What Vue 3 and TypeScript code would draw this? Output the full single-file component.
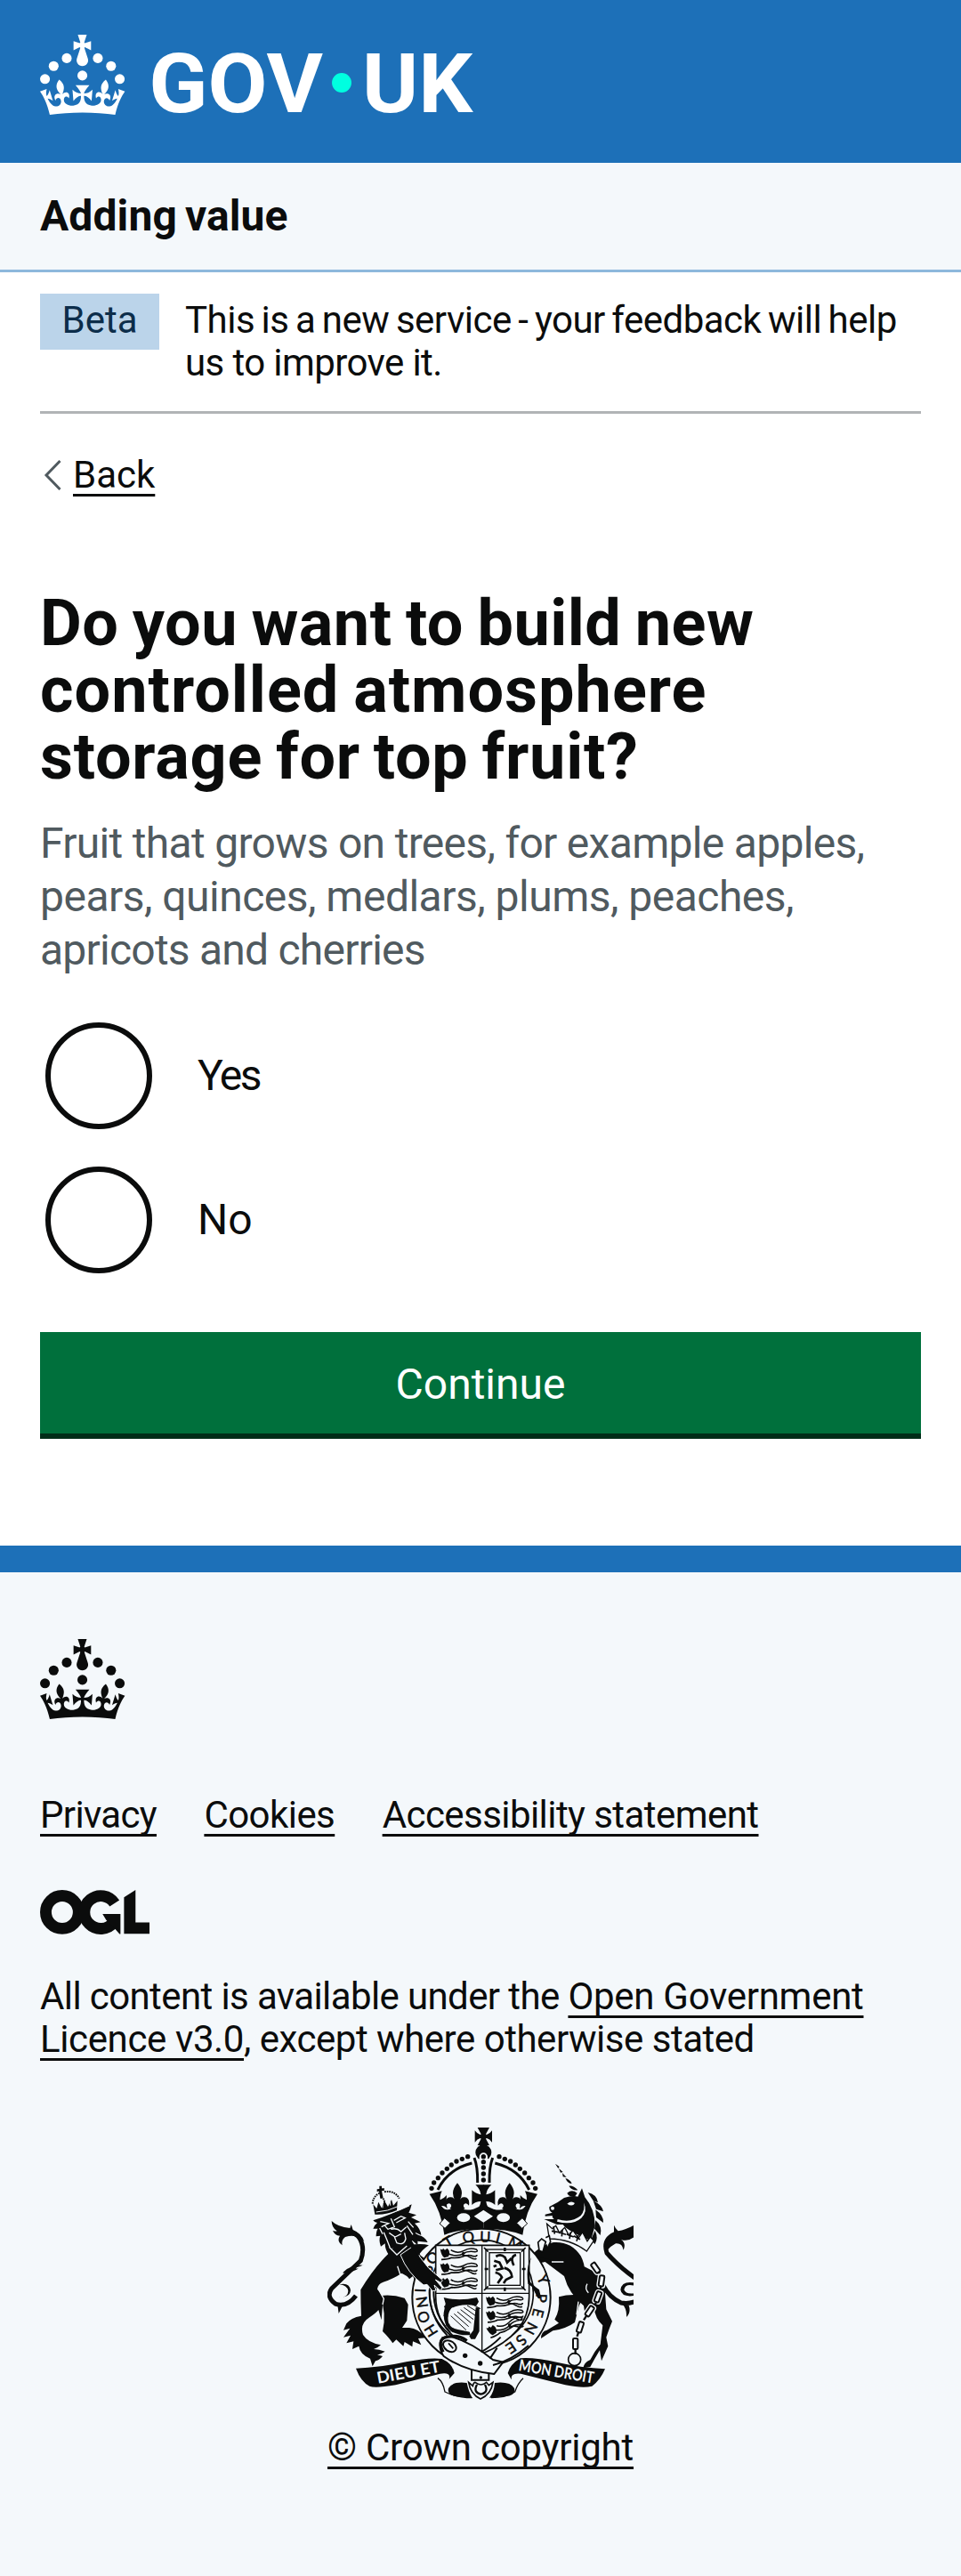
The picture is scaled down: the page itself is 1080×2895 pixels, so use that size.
<script setup lang="ts">
import { ref } from 'vue'

type Glyph = { c: string; x: number; y: number; r: number }
type Pose = { x: number; y: number; r: number }

const answer = ref<string>('')
const options = [
  { value: 'yes', label: 'Yes' },
  { value: 'no', label: 'No' },
]

const crownBeads = [
  [20, 17.6], [10.2, 23.5], [3.7, 33.2], [43.3, 17.6], [53.2, 23.5], [59.7, 33.2], [31.7, 30.6],
]
const crownPath =
  'M33.1,9.8c.2-.1.3-.3.5-.5l4.6,2.4v-6.8l-4.6,1.5c-.1-.2-.3-.3-.5-.5l1.9-5.9h-6.7l1.9,5.9c-.2.1-.3.3-.5.5l-4.6-1.5v6.8l4.6-2.4c.1.2.3.3.5.5l-2.6,8c-.9,2.8,1.2,5.7,4.1,5.7h0c3,0,5.1-2.9,4.1-5.7l-2.6-8ZM37,37.9s-3.4,3.8-4.1,6.1c2.2,0,4.2-.5,6.4-2.8l-.7,8.5c-2-2.8-4.4-4.1-5.7-3.8.1,3.1.5,6.7,5.8,7.2,3.7.3,6.7-1.5,7-3.8.4-2.6-2-4.3-3.7-1.6-1.4-4.5,2.4-6.1,4.9-3.2-1.9-4.5-1.8-7.7,2.4-10.9,3,4,2.6,7.3-1.2,11.1,2.4-1.3,6.2,0,4,4.6-1.2-2.8-3.7-2.2-4.2.2-.3,1.7.7,3.7,3,4.2,1.9.3,4.7-.9,7-5.9-1.3,0-2.4.7-3.9,1.7l2.4-8c.6,2.3,1.4,3.7,2.2,4.5.6-1.6.5-2.8,0-5.3l5,1.8c-2.6,3.6-5.2,8.7-7.3,17.5-7.4-1.1-15.7-1.7-24.5-1.7h0c-8.8,0-17.1.6-24.5,1.7-2.1-8.9-4.7-13.9-7.3-17.5l5-1.8c-.5,2.5-.6,3.7,0,5.3.8-.8,1.6-2.3,2.2-4.5l2.4,8c-1.5-1-2.6-1.7-3.9-1.7,2.3,5,5.2,6.2,7,5.9,2.3-.4,3.3-2.4,3-4.2-.5-2.4-3-3.1-4.2-.2-2.2-4.6,1.6-6,4-4.6-3.7-3.7-4.2-7.1-1.2-11.1,4.2,3.2,4.3,6.4,2.4,10.9,2.5-2.8,6.3-1.3,4.9,3.2-1.8-2.7-4.1-1-3.7,1.6.3,2.3,3.3,4.1,7,3.8,5.4-.5,5.7-4.2,5.8-7.2-1.3-.2-3.7,1-5.7,3.8l-.7-8.5c2.2,2.3,4.2,2.7,6.4,2.8-.7-2.3-4.1-6.1-4.1-6.1h10.6,0Z'

const archBeads = [
  [405, 238], [413, 219], [427, 203], [441, 186], [457, 172], [472, 159], [489, 147], [508, 139], [527, 131],
]
const stemBeads = [131, 149, 168, 189, 210]

// Garter motto, letter by letter round the belt
const motto: Glyph[] = [
  { c: 'H', x: 403, y: 718, r: 58 }, { c: 'O', x: 378, y: 672, r: 68 }, { c: 'N', x: 373, y: 622, r: 82 },
  { c: 'I', x: 367, y: 582, r: 92 }, { c: 'S', x: 391, y: 508, r: -66 }, { c: 'O', x: 408, y: 472, r: -56 },
  { c: 'T', x: 462, y: 418, r: -30 }, { c: 'Q', x: 529, y: 402, r: -8 }, { c: 'U', x: 586, y: 401, r: 2 },
  { c: 'I', x: 629, y: 406, r: 14 }, { c: 'M', x: 688, y: 424, r: 26 }, { c: 'Y', x: 782, y: 545, r: 66 },
  { c: 'P', x: 776, y: 608, r: 92 }, { c: 'E', x: 764, y: 658, r: 104 }, { c: 'N', x: 740, y: 710, r: 118 },
  { c: 'S', x: 708, y: 750, r: 134 }, { c: 'E', x: 673, y: 775, r: 146 },
]

const passant: Pose[] = [
  { x: 430, y: 438, r: 0 }, { x: 430, y: 488, r: 0 }, { x: 430, y: 538, r: 0 },
  { x: 584, y: 600, r: 0 }, { x: 584, y: 650, r: -3 }, { x: 584, y: 706, r: -18 },
]
const harpStrings = [0, 1, 2, 3, 4, 5, 6]
const links: Pose[] = [
  { x: 958, y: 506, r: -35 }, { x: 978, y: 550, r: 8 }, { x: 966, y: 604, r: 20 },
  { x: 938, y: 652, r: 34 }, { x: 906, y: 706, r: 18 }, { x: 890, y: 762, r: 0 },
]
</script>

<template>
  <div class="page">
    <header class="header">
      <svg class="logotype" viewBox="0 0 330 60" role="img" aria-label="GOV.UK">
        <g fill="#fff">
          <circle v-for="(b, i) in crownBeads" :key="i" :cx="b[0]" :cy="b[1]" r="3.7" />
          <path :d="crownPath" />
          <text class="logo-text" x="81.500" y="58.1" textLength="130.500" lengthAdjust="spacingAndGlyphs">GOV</text>
          <text class="logo-text" x="241.3" y="58.1" textLength="82.800" lengthAdjust="spacingAndGlyphs">UK</text>
        </g>
        <circle cx="226" cy="36" r="7.3" fill="#00ffe0" />
      </svg>
    </header>

    <nav class="service"><span>Adding value</span></nav>

    <div class="container">
      <div class="phase">
        <strong class="tag">Beta</strong>
        <p class="phase-text">
          <span class="phase-a">This is a new service - your feedback will help</span><br />
          <span class="phase-b">us to improve it.</span>
        </p>
      </div>

      <a class="back">
        <svg viewBox="0 0 20 34" class="chevron"><path d="M18.5 1 3 17l15.5 16" fill="none" stroke="#505a5f" stroke-width="3" /></svg>
        <span class="link">Back</span>
      </a>

      <main>
        <h1>
          <span class="h-a">Do you want to build new</span><br />
          <span class="h-b">controlled atmosphere</span><br />
          <span class="h-c">storage for top fruit?</span>
        </h1>
        <p class="hint">
          <span class="hint-a">Fruit that grows on trees, for example apples,</span><br />
          <span class="hint-b">pears, quinces, medlars, plums, peaches,</span><br />
          <span class="hint-c">apricots and cherries</span>
        </p>
        <div class="radios">
          <label v-for="o in options" :key="o.value" class="radio">
            <input v-model="answer" type="radio" name="storage" :value="o.value" />
            <span :class="['radio-label', o.value]">{{ o.label }}</span>
          </label>
        </div>
        <button class="button" type="button">Continue</button>
      </main>
    </div>

    <footer class="footer">
      <svg class="crown" viewBox="0 0 64 60">
        <circle v-for="(b, i) in crownBeads" :key="i" :cx="b[0]" :cy="b[1]" r="3.7" />
        <path :d="crownPath" />
      </svg>
      <div class="links">
        <a class="link l-privacy">Privacy</a>
        <a class="link l-cookies">Cookies</a>
        <a class="link l-access">Accessibility statement</a>
      </div>
      <svg class="ogl" viewBox="0 0 483.2 195.7" aria-label="Open Government Licence">
        <circle cx="97.8" cy="97.8" r="72.4" fill="none" stroke="currentColor" stroke-width="50.7" />
        <path d="M329 59A72.4 72.4 0 1 0 325 143" fill="none" stroke="currentColor" stroke-width="50.7" />
        <path d="M276 106h79v88h-4l-19-22-40-40z" />
        <path d="M421.500 142.800V0l-50.700 32.400v161.100h112.400v-50.700z" />
      </svg>
      <p class="licence">
        <span class="li-a">All content is available under the </span><a class="link li-b">Open Government</a><br />
        <a class="link li-c">Licence v3.0</a><span class="li-d">, except where otherwise stated</span>
      </p>

      <div class="copyright">
        <svg class="crest" viewBox="54 33 1032 918" fill="currentColor">
          <defs>
            <g id="passant">
              <path d="M4 4q8 6 10-2l6 6 8-6 6 8q4 10-2 20l-14 4q-10-6-14-30z" />
              <path d="M8 40q22 0 34-6 20 2 38-4 20-8 32-2 16 4 16-4" fill="none" stroke="currentColor" stroke-width="5" />
              <path d="M40 8q22 14 44 2 20-12 42-4 8 8-4 8-26-4-40 6-18 12-48 2m44 4q16-2 30 8 14 8 18 2" fill="none" stroke="currentColor" stroke-width="4.5" />
              <circle cx="82" cy="19" r="5" />
            </g>
            <g id="crown-half">
              <circle v-for="(b, i) in archBeads" :key="i" :cx="b[0]" :cy="b[1]" r="8" />
              <path d="M426 243q34-70 115-90" fill="none" stroke="currentColor" stroke-width="9" />
              <path d="M549 135q12 30 11 84" fill="none" stroke="currentColor" stroke-width="9" />
              <path d="M398 257l42-10q-8 16-6 30 12-4 22-16-2 26 2 46-8-12-20-10 10 16 26 12 18-2 28-9 24 16 54 8 20-6 34-20v86q-78 0-132 21-10-82-50-138z" />
              <path d="M492 220q15 18 15 34 0 12-8 28 4-16 18-14 18 2 14 28-8-12-16-5-6 7 3 15l-16 8h-20l-16-8q9-8 3-15-8-7-16 5-4-26 14-28 14-2 18 14-8-16-8-28 0-16 15-34z" />
              <path d="M553 226h28v90h-26q14-16 16-34-18 0-30 12v-50q12 12 30 15-2-18-18-33z" />
            </g>
          </defs>

          <!-- lion's tail -->
          <path d="M150 600q-30 40-68 28-34-24-14-52l98-94q16-44-4-76-10-16-32-20" fill="none" stroke="currentColor" stroke-width="15" />
          <path d="M68 348q20 20 62 24l4-12 6 18q30 12 38 40-24-28-64-16-14 10-10 28-20-14-8-32-18-2-24-18 10 4 14 2-18-12-18-34zM88 602q34 8 36-18-4-20-30-22 34-8 38 20-2 28-44 20zM108 520q20-22 68-24-14 8-30 10 8 4 14 2-22 14-54 16zM92 660l-4-30 20-2z" />

          <!-- lion -->
          <path d="M262 456q-52 50-96 124 0 44 2 88-36 6-50 26l-10 22 22-6-22 30 24-6-14 26 24-6-4 26 22-10q4 28 38 42l8 26 10-18q12-2 24-16-10-4-18-4 14-4 26-12-20-8-38-8 14-4 24-14-44-8-60-34-12-38 20-58 22-14 32-26l10 34 4-50q6-32-18-54 2-18 20-24 36-12 62-30 22 10 26 20l12-10 10 20 14-12 16 20 12-14 20 20 10-16 22 4q-30-60-78-92l-30-50 54 6q-10-20-30-24l-40-20z" />
          <path d="M232 600q40-6 82 8l12 22-4 54-16 24 24 0q30 2 56 34l-26 2 10 22-28-12-2 18-26-16-4 14-24-22-12 12q-12-18-34-40 14-58-8-120z" />
          <path d="M208 346q60-18 130-54-4 18-10 28l26 8-18 8 32 16-20 4q20 18 22 40l-20-10q10 22 8 44l-20-18-8 28-22-18-18 38-16-22-12 26q-14-18-14-40l-14 10q-8-22-2-36l-14 2q0-18 6-26l-16 0q6-14 14-20-10-2-14-8z" />
          <path d="M212 334q56-8 118-38M232 350l28 6-24 12M278 346l24-14 14 6-30 16M268 340l12 28-22 8-10-12M268 376q20-6 34 8l18-16M262 388l20 14 20-10M280 402l8 20q24 10 30-14l-4-20M244 386l10 24 10 26M326 350l18 20M322 364l20 30M230 372l10 20M262 436l26 26 34-30M248 570l-20 12 16 28-4 20M290 500l14 42M330 470l20 30 40 32M170 496l20-6" fill="none" stroke="#f4f8fb" stroke-width="4" />
          <path d="M214 326l-6-34 12 14 6-22 10 20 10-24 12 20 12-24 6 20 14-16-2 32q-36 16-74 14z" />
          <path d="M218 318q40-2 76-20M240 290v14M266 284v12" fill="none" stroke="#f4f8fb" stroke-width="3" />
          <path d="M229 230l8 0 0 8 9 0-1 8-8 1 5 24-10 1-4-24-7 1 0-8 8-1z" />
          <path d="M206 290q2-26 24-36m4 14q12 4 12 16m0-34q34-6 50 22" fill="none" stroke="currentColor" stroke-width="6" stroke-dasharray="5 3" />

          <!-- unicorn's tail -->
          <path d="M984 566q20 40 60 58 30 6 60-10M1090 540q-56-40-94-84-16-50 36-68" fill="none" stroke="currentColor" stroke-width="15" />
          <path d="M1020 362q4 10 14 20 26-4 54-20v40q-24 18-44 8 18 14 8 36-4-24-26-22-20 10-34 28 0-40 28-56zM1086 556q-40-6-44 24 4 26 46 20v-8q-28 4-34-12 4-22 34-14zM1050 630q14 16 12 42 16-14 8-40z" />

          <!-- unicorn -->
          <path d="M740 468q30-40 76-48 60-4 92 46 10 20 12 36l40 20q32 26 30 70l4 54 20 40q-10 24-20 54l6 30-22 50-6-36q-18 30-32 56l-24 4q2-18 24-28 12-26 34-52l8-64q-24-20-30-60-20 14-28 34l-6-40q-50-40-66-100l-64-48q-28 4-52 22z" />
          <path d="M762 470l78 14-10 10-50-14-24 20q-4 30 8 50l14 50-14 8-22-44-12-10q-6-40 12-66z" />
          <path d="M834 604q40-12 86-4l-18 34-14 56q-30 22-74 28l-40 26q0-24 20-28l40-24-14-12q18-28 14-76z" />
          <path d="M770 490q-6 20-26 22M850 486l-40 0M930 560q-10 16 4 30M900 620l-6 44M766 556l8 30" fill="none" stroke="#f4f8fb" stroke-width="4" />
          <path d="M802 300q30-14 50-30 30-10 46-4l14-28 10 30q34 40 34 96l-14 50q-40-16-64-30-24-14-30-24l-20 0-20-8-24-10 34 0q-10-10-4-12l-26 2 0-6 24-6q-12-6-10-20z" />
          <path d="M830 342q46 14 78-12 16-18 10-44 14 30-8 52-30 26-82 12zM862 290q14-12 26-2-8 14-26 2z" fill="#f4f8fb" />
          <circle cx="813" cy="305" r="6" fill="#f4f8fb" />
          <path d="M822 155l14 10-4 6zM834 171l14 12-8 2zM846 186l14 15-12-2zM856 204q16 4 22 18-14 0-22-18zM868 230q16-2 30 14-20 2-30-14zM862 254q16-14 34 0l-8 12q-20 2-26-12zM932 252q30 6 34 34l-16-6zM950 280q30 14 34 36l-24-8zM958 310q28 20 26 44l-24-18zM958 346q24 20 16 50l-20-22zM956 380q12 24 0 46l-14-14z" />
          <path d="M794 358l8 50q70 0 126 42l24-36-12-12-10 14-16-30-14 20-18-26-14 16-14-26-18 18-12-24-12 10z" fill="#f4f8fb" stroke="currentColor" stroke-width="4" />
          <path d="M816 366l4 26m-10-10l24 4m12-8l-2 22m-10-14l24 8m16-8l-4 22m-10-16l24 10m16-6l-6 20m-10-18l22 12" fill="none" stroke="currentColor" stroke-width="5" />

          <!-- garter -->
          <ellipse cx="573" cy="606" rx="233" ry="232" fill="#f4f8fb" stroke="currentColor" stroke-width="6" />
          <ellipse cx="573" cy="590" rx="175" ry="178" fill="none" stroke="currentColor" stroke-width="5" />
          <text v-for="(g, i) in motto" :key="i" class="motto" text-anchor="middle" dominant-baseline="central" :transform="`translate(${g.x} ${g.y}) rotate(${g.r})`">{{ g.c }}</text>

          <!-- royal crown -->
          <use href="#crown-half" />
          <use href="#crown-half" transform="matrix(-1 0 0 1 1160 0)" />
          <path d="M560 33h40l-11 20q-1 6 2 4 10-2 18-14v40q-8-12-18-14-4-1-2 4l11 20h-40l11-20q2-5-2-4-10 2-18 14V43q8 12 18 14 4 1 2-4z" />
          <circle cx="580" cy="117" r="27" />
          <path d="M566 148v-16a14 14 0 0 1 28 0v16z" fill="#f4f8fb" />
          <circle v-for="y in stemBeads" :key="y" cx="580" :cy="y" r="8" />
          <g fill="#f4f8fb">
            <path d="M580 311l32 21-32 21-32-21z" />
            <ellipse cx="513" cy="337" rx="22" ry="15" /><ellipse cx="647" cy="337" rx="22" ry="15" />
            <path d="M449 338l19 17-18 18-18-16zM711 338l-19 17 18 18 18-16z" stroke="currentColor" stroke-width="3" />
          </g>

          <!-- shield -->
          <path d="M419 430h315v170q2 130-159 196-157-66-156-196z" fill="#f4f8fb" stroke="currentColor" stroke-width="5" />
          <path d="M575 430v366M420 592h314" stroke="currentColor" stroke-width="4" />
          <use v-for="(p, i) in passant" :key="i" href="#passant" :transform="`translate(${p.x} ${p.y}) rotate(${p.r})`" />
          <g fill="none" stroke="currentColor">
            <rect x="588" y="444" width="128" height="132" stroke-width="4" />
            <rect x="600" y="455" width="104" height="110" stroke-width="4" />
            <path d="M652 438v12m0 122v12M584 510h12m114 0h12" stroke-width="8" />
            <path d="M582 438l14 14m126-14l-14 14M582 582l14-14m126 14l-14-14" stroke-width="5" />
            <path d="M622 468q16-10 30 2l8 18 14-14m-58 8l18 6 10 20-22 6m2-16-10 4m36 4q24 6 26 30l-20 10-8 12m-28-36q16 2 22 16l-14 20m54-60q-14-30 8-36" stroke-width="8" />
          </g>
          <path d="M446 606q50 14 112 0l6 14-8 14q-50-10-84 8-16 20-10 48 6 20 32 24l40 8 2 10q-30 4-62-10-30-20-28-64l6-32z" />
          <path d="M566 640v80l-14 26h-14l-6-10 14-20 8-76z" />
          <path v-for="n in harpStrings" :key="n" :d="`M${470 + n * 11} ${668 - n * 7}l${52 - n * 3} ${48 - n * 5}`" stroke="currentColor" stroke-width="3" />
          <path d="M398 580q-2 90 60 154M412 580q-2 84 56 144M448 636l10 4m-12 26l14 4m-6 28l12 0m4 20l6-8" fill="none" stroke="currentColor" stroke-width="6" />

          <!-- paws laid over the shield -->
          <path d="M300 462l44-30q20 40 52 76 24 20 46 40l-6 8-18-10 22 26-4 12-22-20 6 18-12 2-18-22-12 2q-54-40-78-102z" stroke="#f4f8fb" stroke-width="3" />
          <path d="M330 430q40-8 66 0-22 14-36 36z" />
          <path d="M742 470q-16 40-4 84 16 16 30 26l6 26q-6 8-12 0l-18-36-14-10q-8-60 12-90z" />
          <path d="M764 420l12-12 14 10-10 34-12-4zM790 404l12-6 4 20-10 20" fill="#f4f8fb" stroke="currentColor" stroke-width="5" />

          <!-- chain -->
          <g v-for="(l, i) in links" :key="i" :transform="`translate(${l.x} ${l.y}) rotate(${l.r})`">
            <rect x="-9" y="-19" width="18" height="38" rx="5" fill="#f4f8fb" stroke="#f4f8fb" stroke-width="12" />
            <rect x="-8" y="-18" width="16" height="36" rx="4" fill="#f4f8fb" stroke="currentColor" stroke-width="6" />
            <path d="M0 20v16" stroke="currentColor" stroke-width="7" />
          </g>
          <circle cx="887" cy="815" r="21" fill="none" stroke="currentColor" stroke-width="5" />

          <!-- buckle and strap -->
          <g fill="#f4f8fb" stroke="currentColor" stroke-width="6">
            <path d="M540 836v48h58v-48" />
            <path d="M436 752q10-16 36-14 70 20 140 78l34 8-30 40q-100-10-170-60-18-26-10-52z" />
            <path d="M440 744q50-18 84 8M444 790q-20-40 8-50" stroke-width="10" fill="none" />
            <ellipse cx="466" cy="770" rx="24" ry="17" transform="rotate(35 466 770)" />
            <path d="M462 760l16 18" stroke-width="5" />
            <path d="M572 790q36-20 66-50M602 812l24-36" fill="none" />
            <path d="M612 834q60-14 120-66" fill="none" />
          </g>
          <circle cx="518" cy="802" r="8" /><circle cx="569" cy="828" r="8" /><circle cx="571" cy="876" r="5" />

          <!-- ribbon -->
          <path d="M426 878q18 12 24 46 40 20 92 20M714 878q-18 16-28 46-30 20-80 20" fill="none" stroke="currentColor" stroke-width="4" />
          <path d="M462 912q14-24 62-18 6 30 18 50l-50-4q-36-4-30-28zM684 912q-14-24-66-18-2 30-18 50l54-4q36-4 30-28z" />
          <path d="M150 845q80-2 170-22 80-16 120-10 36 16 42 48l-18 20q8-24-30-18-80 20-150 38-70 12-88 4-30-16-46-60z" />
          <path d="M990 847q-80-4-160-22-80-18-126-14-34 20-42 50l12 22q-4-24 32-20 80 20 150 38 60 12 90 4 28-20 44-58z" />
          <path d="M530 892l14 12q2-10 8-12 20 16 38 0l8 10 14-10q-6 40-42 56-34-16-40-56z" fill="#f4f8fb" stroke="currentColor" stroke-width="5" />
          <path d="M558 900q-14 26 13 32 28-6 14-32" fill="none" stroke="currentColor" stroke-width="7" />
          <text class="ribbon" transform="translate(224 896) rotate(-10.500)" textLength="216" lengthAdjust="spacingAndGlyphs">DIEU ET</text>
          <text class="ribbon" transform="translate(697 852) rotate(9.800)" textLength="256" lengthAdjust="spacingAndGlyphs">MON DROIT</text>
        </svg>
        <a class="link l-copy">© Crown copyright</a>
      </div>
    </footer>
  </div>
</template>

<style>
html,
body {
  margin: 0;
  background: #f4f8fb;
}
</style>

<style scoped>
.page {
  width: 1080px;
  min-height: 2895px;
  background: #fff;
  color: #0b0c0c;
  font-family: Roboto, "Liberation Sans", sans-serif;
  display: flex;
  flex-direction: column;
}
p,
h1 {
  margin: 0;
}
.header {
  height: 183px;
  padding: 39px 45px 0;
  box-sizing: border-box;
  background: #1d70b8;
}
.logotype {
  display: block;
  width: 495px;
  height: 90px;
  overflow: visible;
}
.logo-text {
  font: 700 62px Roboto, sans-serif;
}
.service {
  height: 123px;
  box-sizing: border-box;
  padding: 30px 45px 0;
  background: #f4f8fb;
  border-bottom: 3px solid #8eb8dc;
  font-size: 48px;
  line-height: 60px;
  font-weight: 700;
  letter-spacing: 0.1px;
  word-spacing: -3px;
}
.container {
  padding: 0 45px;
}
.phase {
  display: flex;
  height: 159px;
  box-sizing: border-box;
  border-bottom: 3px solid #b1b4b6;
  font-size: 42px;
  line-height: 48px;
  white-space: nowrap;
}
.tag {
  box-sizing: border-box;
  width: 134px;
  height: 63px;
  margin: 24px 29px 0 0;
  padding-top: 6px;
  background: #bbd4ea;
  color: #0c2d4a;
  font-weight: 400;
  text-align: center;
}
.phase-text {
  padding-top: 30px;
}
.phase-a {
  letter-spacing: -0.5px;
  word-spacing: -2.4px;
}
.phase-b {
  letter-spacing: -0.6px;
}
.back {
  display: flex;
  margin-top: 45px;
  height: 48px;
  font-size: 42px;
  line-height: 48px;
}
.chevron {
  width: 20px;
  height: 34px;
  margin: 7px 13px 0 4px;
}
.link {
  color: #0b0c0c;
  text-decoration: underline;
  text-decoration-thickness: 3px;
  text-decoration-skip-ink: none;
  text-underline-offset: 7px;
}
h1 {
  margin-top: 105px;
  font-size: 72px;
  line-height: 75px;
  font-weight: 700;
  white-space: nowrap;
}
.h-a {
  letter-spacing: 0.5px;
  word-spacing: -3px;
}
.h-b {
  letter-spacing: 1px;
  word-spacing: -3px;
}
.h-c {
  letter-spacing: 0.75px;
  word-spacing: -3.8px;
}
.hint {
  margin-top: 30px;
  color: #505a5f;
  font-size: 48px;
  line-height: 60px;
  white-space: nowrap;
}
.hint-a {
  letter-spacing: -0.69px;
}
.hint-b {
  letter-spacing: -0.51px;
}
.hint-c {
  letter-spacing: -0.77px;
}
.radios {
  display: flex;
  flex-direction: column;
  gap: 42px;
  margin-top: 51px;
  padding-left: 6px;
}
.radio {
  display: flex;
  align-items: center;
  gap: 51px;
  height: 120px;
  font-size: 48px;
}
.radio input {
  appearance: none;
  box-sizing: border-box;
  width: 120px;
  height: 120px;
  margin: 0;
  border: 6px solid #0b0c0c;
  border-radius: 50%;
  background: #fff;
}
.radio-label {
  padding-bottom: 2px;
}
.radio-label.yes {
  letter-spacing: -2.5px;
}
.button {
  display: block;
  width: 100%;
  height: 114px;
  margin: 66px 0 0;
  padding: 2px 0 0;
  border: 0;
  border-radius: 0;
  background: #00703c;
  box-shadow: 0 6px 0 #002d18;
  color: #fff;
  font: 400 48px Roboto, sans-serif;
}
.footer {
  flex: 1;
  margin-top: 126px;
  padding: 75px 45px 0;
  border-top: 30px solid #1d70b8;
  background: #f4f8fb;
  font-size: 42px;
  line-height: 48px;
  white-space: nowrap;
}
.crown {
  display: block;
  width: 96px;
  height: 90px;
  fill: currentColor;
}
.links {
  display: flex;
  gap: 53.4px;
  margin-top: 84px;
}
.l-privacy {
  letter-spacing: -0.67px;
}
.l-cookies {
  letter-spacing: -0.55px;
}
.l-access {
  letter-spacing: -0.56px;
}
.ogl {
  display: block;
  width: 123px;
  height: 50px;
  margin-top: 60px;
  fill: currentColor;
}
.licence {
  margin-top: 46px;
}
.li-a {
  letter-spacing: -0.61px;
}
.li-b {
  letter-spacing: -0.29px;
}
.li-c {
  letter-spacing: -0.38px;
}
.li-d {
  letter-spacing: -0.48px;
}
.copyright {
  display: flex;
  flex-direction: column;
  align-items: center;
  margin-top: 75px;
}
.crest {
  display: block;
  width: 344px;
  height: 306px;
  overflow: hidden;
}
.motto {
  font: 400 50px Lato, sans-serif;
  stroke: currentColor;
  stroke-width: 1.5px;
}
.ribbon {
  font: 700 54px Lato, sans-serif;
  fill: #f4f8fb;
}
.l-copy {
  margin-top: 30px;
  letter-spacing: -0.22px;
}
</style>
